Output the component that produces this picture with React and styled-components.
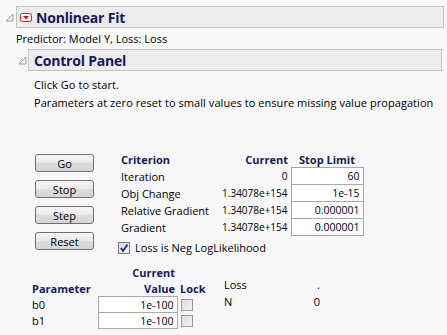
import React from 'react'
import styled, { createGlobalStyle } from 'styled-components'

const GlobalStyle = createGlobalStyle`
  html, body {
    margin: 0;
    padding: 0;
    background: #f7f7f7;
  }
  body {
    font-family: "Open Sans", "Noto Sans", sans-serif;
    font-size: 11px;
    color: #000;
  }
`

const criteria = [
  { name: 'Iteration', current: '0', limit: '60' },
  { name: 'Obj Change', current: '1.34078e+154', limit: '1e-15' },
  { name: 'Relative Gradient', current: '1.34078e+154', limit: '0.000001' },
  { name: 'Gradient', current: '1.34078e+154', limit: '0.000001' },
]

const params = [
  { name: 'b0', value: '1e-100' },
  { name: 'b1', value: '1e-100' },
]

const Disclosure = () => (
  <svg width="9" height="9" viewBox="0 0 9 9">
    <polygon points="8,1 8,8 1,8" fill="#f0f0f0" stroke="#9a9a9a" strokeWidth="1" strokeLinejoin="round" />
  </svg>
)

const RedMenu = () => (
  <svg width="12" height="9" viewBox="0 0 12 9">
    <rect x="0.5" y="0.5" width="11" height="8" rx="2" fill="#fff" stroke="#c8202a" />
    <polygon points="3,3 9,3 6,6.5" fill="#d0141e" />
  </svg>
)

const CheckBox = ({ checked }) => (
  <Box $checked={checked}>
    {checked && (
      <svg width="10" height="10" viewBox="0 0 10 10">
        <path d="M2 5 L4 8 L8.5 1.5" fill="none" stroke="#1c2b8c" strokeWidth="1.8" />
      </svg>
    )}
  </Box>
)

const App = () => {
  return (
    <>
      <GlobalStyle />
      <Page>
        <OutlineRow $right={3}>
          <Slot $w={16} $pad={5}><Disclosure /></Slot>
          <HeaderBox>
            <MenuSlot><RedMenu /></MenuSlot>
            <Title>Nonlinear Fit</Title>
          </HeaderBox>
        </OutlineRow>
        <Indent $left={16}>
          <Note>Predictor: Model Y, Loss: Loss</Note>
          <OutlineRow $right={5}>
            <Slot $w={12} $pad={2}><Disclosure /></Slot>
            <HeaderBox>
              <Title $pad={5}>Control Panel</Title>
            </HeaderBox>
          </OutlineRow>
          <Panel>
            <Message>Click Go to start.</Message>
            <Message>Parameters at zero reset to small values to ensure missing value propagation</Message>

            <Controls>
              <ButtonColumn>
                <ActionButton>Go</ActionButton>
                <ActionButton>Stop</ActionButton>
                <ActionButton>Step</ActionButton>
                <ActionButton>Reset</ActionButton>
              </ButtonColumn>
              <div>
                <CritTable>
                  <colgroup>
                    <col style={{ width: 100 }} />
                    <col style={{ width: 70 }} />
                    <col style={{ width: 72 }} />
                  </colgroup>
                  <thead>
                    <tr>
                      <Th>Criterion</Th>
                      <Th $align="right" $pr={3}>Current</Th>
                      <Th $align="center">Stop Limit</Th>
                    </tr>
                  </thead>
                  <tbody>
                    {criteria.map((c) => (
                      <tr key={c.name}>
                        <Td>{c.name}</Td>
                        <NumTd>{c.current}</NumTd>
                        <InputCell>{c.limit}</InputCell>
                      </tr>
                    ))}
                  </tbody>
                </CritTable>
                <CheckRow>
                  <CheckBox checked />
                  <span>Loss is Neg LogLikelihood</span>
                </CheckRow>
              </div>
            </Controls>

            <ParamArea>
              <ParamTable>
                <colgroup>
                  <col style={{ width: 66 }} />
                  <col style={{ width: 79 }} />
                  <col style={{ width: 30 }} />
                </colgroup>
                <thead>
                  <tr>
                    <Th $h={16} />
                    <Th $h={16} $align="right" $pr={2}>Current</Th>
                    <Th $h={16} />
                  </tr>
                  <tr>
                    <Th $h={16}>Parameter</Th>
                    <Th $h={16} $align="right" $pr={2}>Value</Th>
                    <Th $h={16} $pl={3}>Lock</Th>
                  </tr>
                </thead>
                <tbody>
                  {params.map((p) => (
                    <tr key={p.name}>
                      <Td $h={16}>{p.name}</Td>
                      <InputCell $h={15}>{p.value}</InputCell>
                      <LockCell><CheckBox /></LockCell>
                    </tr>
                  ))}
                </tbody>
              </ParamTable>
              <Summary>
                <colgroup>
                  <col style={{ width: 80 }} />
                  <col style={{ width: 16 }} />
                </colgroup>
                <tbody>
                  <tr>
                    <SumTd>Loss</SumTd>
                    <SumTd $align="right">.</SumTd>
                  </tr>
                  <tr>
                    <SumTd>N</SumTd>
                    <SumTd $align="right">0</SumTd>
                  </tr>
                </tbody>
              </Summary>
            </ParamArea>
          </Panel>
        </Indent>
      </Page>
    </>
  )
}

const Page = styled.div`
  padding-top: 6px;
`
const OutlineRow = styled.div`
  display: flex;
  align-items: center;
  margin-right: ${(p) => p.$right}px;
`
const Slot = styled.div`
  width: ${(p) => p.$w}px;
  padding-left: ${(p) => p.$pad}px;
  box-sizing: border-box;
  display: flex;
  align-items: center;
  height: 22px;
`
const HeaderBox = styled.div`
  flex: 1;
  height: 22px;
  box-sizing: border-box;
  background: #ececec;
  border: 1px solid #c4c4c4;
  display: flex;
  align-items: center;
`
const MenuSlot = styled.div`
  display: flex;
  margin: 1px 4px 0 3px;
`
const Title = styled.div`
  font-weight: 700;
  font-size: 14px;
  color: #141a5c;
  letter-spacing: -0.2px;
  padding-left: ${(p) => p.$pad || 0}px;
`
const Indent = styled.div`
  padding-left: ${(p) => p.$left}px;
`
const Note = styled.div`
  height: 21px;
  line-height: 21px;
`
const Panel = styled.div`
  padding-left: 18px;
`
const Message = styled.div`
  line-height: 18px;
  letter-spacing: 0.06px;
  &:first-child {
    margin-top: 5px;
  }
`
const Controls = styled.div`
  display: flex;
  margin-top: 40px;
`
const ButtonColumn = styled.div`
  display: flex;
  flex-direction: column;
  gap: 8px;
  padding-top: 2px;
  margin-left: 1px;
  margin-right: 27px;
`
const ActionButton = styled.button`
  width: 59px;
  height: 18px;
  box-sizing: border-box;
  padding: 0;
  font-family: inherit;
  font-size: 11px;
  color: #000;
  border: 1px solid #707070;
  border-radius: 3px;
  background: linear-gradient(#f6f6f6, #e9e9e9 50%, #dcdcdc 51%, #d6d6d6);
`
const CritTable = styled.table`
  border-collapse: collapse;
  border-spacing: 0;
  table-layout: fixed;
  width: 242px;
`
const Th = styled.th`
  text-align: ${(p) => p.$align || 'left'};
  font-weight: 700;
  color: #141a5c;
  padding: 0 ${(p) => p.$pr || 0}px 0 ${(p) => p.$pl || 0}px;
  height: ${(p) => p.$h || 15}px;
  line-height: 15px;
  white-space: nowrap;
`
const Td = styled.td`
  text-align: left;
  padding: 0;
  height: ${(p) => p.$h || 17}px;
  line-height: 15px;
  white-space: nowrap;
`
const NumTd = styled.td`
  text-align: right;
  padding: 0 3px 0 0;
  font-size: 10px;
  line-height: 15px;
  white-space: nowrap;
`
const InputCell = styled.td`
  background: #fff;
  border: 1px solid #a8a8a8;
  text-align: right;
  padding: 0 3px 0 0;
  height: ${(p) => p.$h || 15}px;
  line-height: 14px;
  font-size: 10.5px;
`
const CheckRow = styled.div`
  display: flex;
  align-items: center;
  gap: 5px;
  margin-top: 4px;
  margin-left: -3px;
`
const Box = styled.span`
  width: 12px;
  height: 12px;
  box-sizing: border-box;
  border: 1px solid ${(p) => (p.$checked ? '#7a7a7a' : '#9a9a9a')};
  background: linear-gradient(135deg, #dcdcdc, #f4f4f4);
  display: inline-flex;
  align-items: center;
  justify-content: center;
`
const ParamArea = styled.div`
  display: flex;
  align-items: flex-start;
  margin-top: 9px;
  margin-left: -2px;
`
const ParamTable = styled.table`
  border-collapse: collapse;
  border-spacing: 0;
  table-layout: fixed;
  width: 175px;
`
const LockCell = styled.td`
  padding: 1px 0 0 3px;
  vertical-align: middle;
  line-height: 0;
`
const Summary = styled.table`
  border-collapse: collapse;
  table-layout: fixed;
  width: 96px;
  margin-top: 12px;
  margin-left: 17px;
`
const SumTd = styled.td`
  text-align: ${(p) => p.$align || 'left'};
  padding: 0;
  height: 17px;
  line-height: 15px;
`

export default App
